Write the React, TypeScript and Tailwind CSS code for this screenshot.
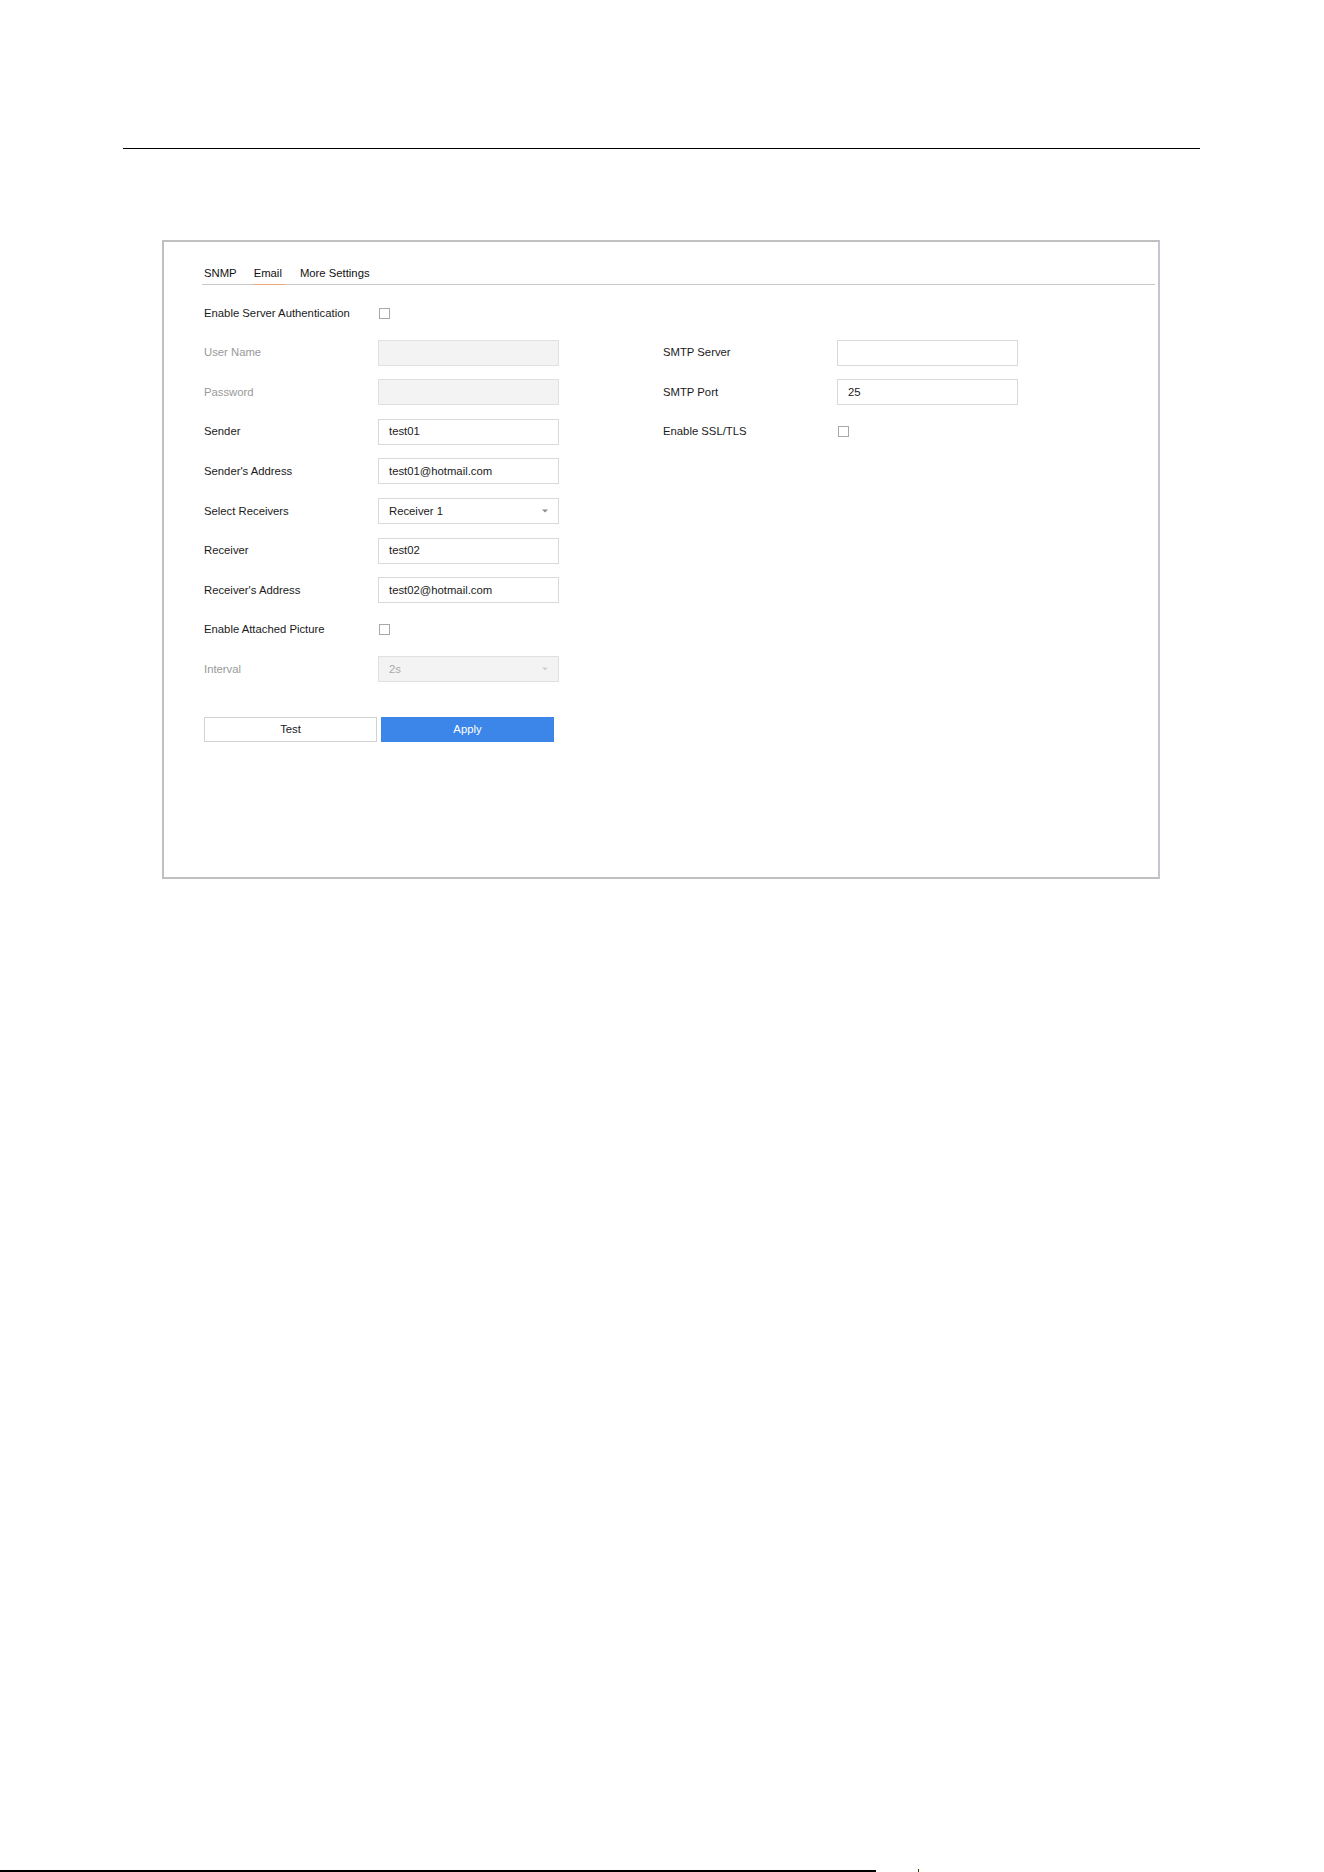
import React from 'react';

type Row =
    | { kind: 'input'; label: string; value?: string; disabled?: boolean }
    | { kind: 'select'; label: string; value: string; disabled?: boolean }
    | { kind: 'check'; label: string }
    | { kind: 'empty' };

const leftRows: Row[] = [
    { kind: 'check', label: 'Enable Server Authentication' },
    { kind: 'input', label: 'User Name', disabled: true },
    { kind: 'input', label: 'Password', disabled: true },
    { kind: 'input', label: 'Sender', value: 'test01' },
    { kind: 'input', label: "Sender's Address", value: 'test01@hotmail.com' },
    { kind: 'select', label: 'Select Receivers', value: 'Receiver 1' },
    { kind: 'input', label: 'Receiver', value: 'test02' },
    { kind: 'input', label: "Receiver's Address", value: 'test02@hotmail.com' },
    { kind: 'check', label: 'Enable Attached Picture' },
    { kind: 'select', label: 'Interval', value: '2s', disabled: true },
];

const rightRows: Row[] = [
    { kind: 'empty' },
    { kind: 'input', label: 'SMTP Server', value: '' },
    { kind: 'input', label: 'SMTP Port', value: '25' },
    { kind: 'check', label: 'Enable SSL/TLS' },
];

const FieldRow = ({ row }: { row: Row }) => {
    if (row.kind === 'empty') return <div className="h-[26px]" />;

    const disabled = 'disabled' in row && row.disabled;
    const labelColor = disabled ? 'text-[#999999]' : 'text-[#1a1a1a]';

    return (
        <div className="flex h-[26px] items-center">
            <div className={`w-[174px] shrink-0 ${labelColor}`}>{row.label}</div>
            {row.kind === 'check' && (
                <div className="ml-px h-[11px] w-[11px] border border-[#a8a8a8] bg-white" />
            )}
            {row.kind === 'input' && (
                <div
                    className={`flex h-[26px] w-[181px] items-center border pl-[10px] ${
                        disabled ? 'border-[#e0e0e0] bg-[#f3f3f3]' : 'border-[#d9d9d9] bg-white text-[#1a1a1a]'
                    }`}
                >
                    {row.value}
                </div>
            )}
            {row.kind === 'select' && (
                <div
                    className={`flex h-[26px] w-[181px] items-center justify-between border pl-[10px] pr-[10px] ${
                        disabled ? 'border-[#e0e0e0] bg-[#f3f3f3] text-[#a8a8a8]' : 'border-[#d9d9d9] bg-white text-[#1a1a1a]'
                    }`}
                >
                    <span>{row.value}</span>
                    <svg width="6" height="4" viewBox="0 0 6 4">
                        <path d="M0 0.5 L6 0.5 L3 3.5 Z" fill={disabled ? '#cfcfcf' : '#8a8a8a'} />
                    </svg>
                </div>
            )}
        </div>
    );
};

export default function App() {
    return (
        <div className="relative flex h-[1872px] w-[1324px] flex-col bg-white font-['Liberation_Sans',Arial,sans-serif] text-[11.3px]">
            {/* page header rule */}
            <div className="ml-[123px] mt-[148px] h-px w-[1077px] bg-black" />

            {/* settings panel */}
            <div className="ml-[162px] mt-[91px] h-[639px] w-[998px] border-2 border-[#c0c0c0] border-r-[#c5c5d0] pl-[38px] pr-[3px] pt-[20px]">
                <div className="flex h-[23px] items-center border-b border-[#c8c8c8] text-[#111111]">
                    <span className="ml-[2px]">SNMP</span>
                    <span className="relative ml-[17px] flex h-full items-center">
                        Email
                        <span className="absolute bottom-[-1px] left-0 right-[-3px] h-px bg-[#eda676]" />
                    </span>
                    <span className="ml-[18px]">More Settings</span>
                </div>

                <div className="ml-[2px] mt-[15px] flex gap-[104px]">
                    <div className="flex flex-col gap-[13.6px]">
                        {leftRows.map((row, i) => (
                            <FieldRow key={i} row={row} />
                        ))}
                    </div>
                    <div className="flex flex-col gap-[13.6px]">
                        {rightRows.map((row, i) => (
                            <FieldRow key={i} row={row} />
                        ))}
                    </div>
                </div>

                <div className="ml-[2px] mt-[35px] flex gap-[4px]">
                    <button className="h-[25px] w-[173px] border border-[#d2d2d2] bg-white text-[#1a1a1a]">Test</button>
                    <button className="h-[25px] w-[173px] bg-[#3b86e8] text-white">Apply</button>
                </div>
            </div>

            {/* page footer rule */}
            <div className="mt-auto flex items-end">
                <div className="h-[2px] w-[876px] bg-black" />
                <div className="ml-[42px] h-[3px] w-px bg-[#3a3a00]" />
            </div>
        </div>
    );
}
